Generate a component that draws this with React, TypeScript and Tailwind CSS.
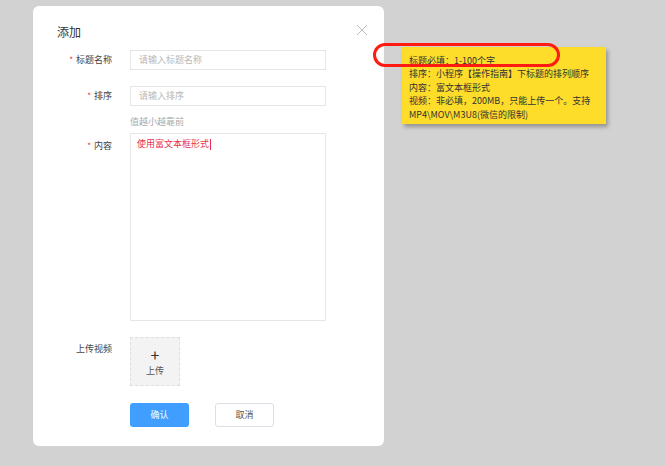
import React from 'react'

const font = { fontFamily: '"Noto Sans CJK SC", "Noto Sans", sans-serif' }

const Label: React.FC<{ text: string; required?: boolean }> = ({ text, required }) => (
  <div className="h-[20px] leading-[20px] text-right text-[9px] text-[#444]">
    {required && <span className="mr-[3px] text-[8px] text-[#f5222d]">*</span>}
    {text}
  </div>
)

const App: React.FC = () => {
  return (
    <div className="relative h-[466px] w-full overflow-hidden bg-[#d2d2d2] pl-[33px] pt-[6px]" style={font}>
      <div className="h-[440px] w-[351px] rounded-[6px] bg-white">
        <div className="flex items-start justify-between pl-[24px] pr-[16px] pt-[17px]">
          <h2 className="text-[12px] leading-[18px] text-[#333]">添加</h2>
          <svg width="12" height="12" viewBox="0 0 12 12" className="mt-[1px]">
            <path d="M1 1 L11 11 M11 1 L1 11" stroke="#bdbdbd" strokeWidth="1" fill="none" />
          </svg>
        </div>

        <div className="mt-[9px] grid grid-cols-[79px_196px] gap-x-[18px]">
          <Label text="标题名称" required />
          <div className="flex h-[20px] items-center border border-[#e6e6e6] px-[8px] text-[9px] text-[#b8b8b8]">
            请输入标题名称
          </div>

          <div className="mt-[16px]">
            <Label text="排序" required />
          </div>
          <div className="mt-[16px] flex h-[20px] items-center border border-[#e6e6e6] px-[8px] text-[9px] text-[#b8b8b8]">
            请输入排序
          </div>

          <div />
          <div className="mt-[8px] h-[16px] leading-[16px] text-[9px] text-[#aaa]">值越小越靠前</div>

          <div className="mt-[3px] pt-[3px]">
            <Label text="内容" required />
          </div>
          <div className="mt-[3px] h-[188px] border border-[#e6e6e6] px-[6px] pt-[2px] text-[9px] leading-[16px]">
            <span className="text-[#e8324c]">使用富文本框形式</span>
            <span className="ml-[1px] inline-block h-[11px] w-px bg-[#e8324c] align-middle" />
          </div>

          <div className="mt-[16px] pt-[2px]">
            <Label text="上传视频" />
          </div>
          <div className="mt-[16px]">
            <div className="flex h-[49px] w-[50px] flex-col items-center justify-center border border-dashed border-[#dedede] bg-[#f3f3f3] text-[#333]">
              <span className="text-[16px] leading-[16px]">+</span>
              <span className="mt-[3px] text-[9px] leading-[12px] text-[#555]">上传</span>
            </div>
          </div>

          <div />
          <div className="mt-[17px] flex gap-[26px]">
            <button className="h-[24px] w-[59px] rounded-[3px] bg-[#409eff] text-[9px] text-white">确认</button>
            <button className="h-[24px] w-[59px] rounded-[3px] border border-[#dcdfe6] bg-white text-[9px] text-[#555]">
              取消
            </button>
          </div>
        </div>
      </div>

      <div className="absolute left-[402px] top-[47px] h-[77px] w-[204px] bg-[#fddc2a] pl-[7px] pt-[6px] text-[9px] leading-[13.4px] text-[#333] shadow-[2px_3px_4px_rgba(0,0,0,0.3)]">
        <div className="mt-[1px]">标题必填：1-100个字</div>
        <div>排序：小程序【操作指南】下标题的排列顺序</div>
        <div>内容：富文本框形式</div>
        <div>视频：非必填，200MB，只能上传一个。支持</div>
        <div>MP4\MOV\M3U8(微信的限制)</div>
      </div>

      <div className="absolute left-[373px] top-[43px] h-[24px] w-[187px] rounded-full border-[3.5px] border-[#ff1a12]" />
    </div>
  )
}

export default App
